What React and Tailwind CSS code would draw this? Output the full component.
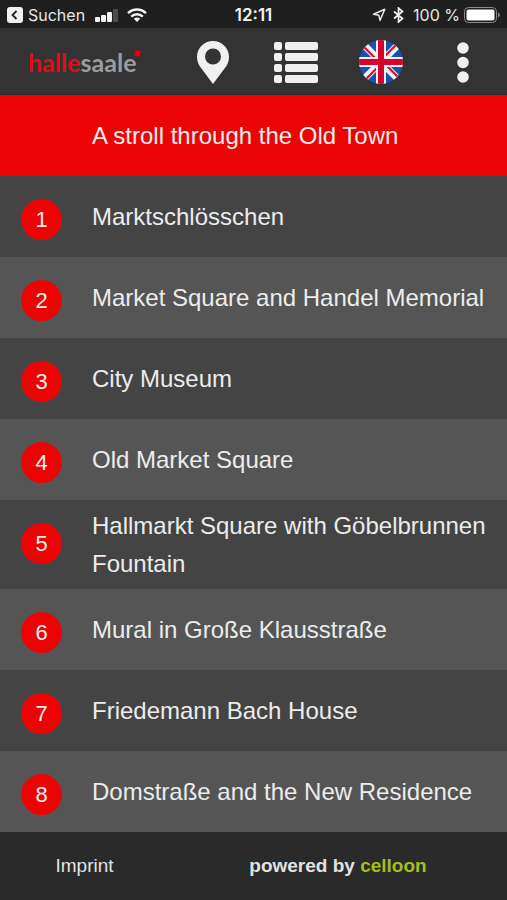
import React from 'react';

const stations = [
    'Marktschlösschen',
    'Market Square and Handel Memorial',
    'City Museum',
    'Old Market Square',
    'Hallmarkt Square with Göbelbrunnen Fountain',
    'Mural in Große Klausstraße',
    'Friedemann Bach House',
    'Domstraße and the New Residence',
];

const StatusBar = () => (
    <div className="grid grid-cols-[1fr_auto_1fr] items-center h-7 pt-[2px] px-[7px] bg-[#1f1f1f] text-[#e6e6e6] font-['Inter','Liberation_Sans',sans-serif] text-base leading-6">
        <div className="flex items-center">
            <svg className="w-4 h-4 mr-[5px]" viewBox="0 0 16 16" aria-hidden="true">
                <rect width="16" height="16" rx="3" fill="#f2f2f2" />
                <path d="M9.5 4 5.5 8l4 4" fill="none" stroke="#222" strokeWidth="1.8" />
            </svg>
            <button type="button" className="mr-[10px]">Suchen</button>
            <svg className="w-[23px] h-[13px] mr-[9px]" viewBox="0 0 23 13" fill="#f2f2f2" aria-hidden="true">
                <rect x="0" y="8" width="5" height="5" rx="1" />
                <rect x="6" y="6" width="5" height="7" rx="1" />
                <rect x="12" y="3" width="5" height="10" rx="1" />
                <rect x="18" y="0" width="5" height="13" rx="1" fill="#4c4c4c" />
            </svg>
            <svg className="w-5 h-[14px]" viewBox="0 0 20 14" fill="none" stroke="#f2f2f2" strokeWidth="2.4" aria-hidden="true">
                <path d="M1 5.2a12.8 12.8 0 0 1 18 0" />
                <path d="M4.2 8.6a8.2 8.2 0 0 1 11.6 0" />
                <path d="M10 14 6.8 10.8a4.5 4.5 0 0 1 6.4 0z" fill="#f2f2f2" stroke="none" />
            </svg>
        </div>
        <time className="font-semibold text-[17px] text-[#f2f2f2]">12:11</time>
        <div className="flex items-center justify-end">
            <svg className="w-[14px] h-[14px] mr-[7px]" viewBox="0 0 14 14" fill="none" stroke="#e6e6e6" strokeWidth="1.5" aria-hidden="true">
                <path d="M12.8 1.2 8 12.4 6.8 7.2 1.5 6.2z" strokeLinejoin="round" />
            </svg>
            <svg className="w-[11px] h-4 mr-[9px]" viewBox="0 0 11 16" fill="none" stroke="#f2f2f2" strokeWidth="1.7" aria-hidden="true">
                <path d="M1 4.5 9.5 11.5 5.5 15V1l4 3.5L1 11.5" />
            </svg>
            <span className="mr-1">100 %</span>
            <svg className="w-9 h-4" viewBox="0 0 36 16" aria-hidden="true">
                <rect x="0.5" y="0.5" width="32" height="15" rx="4" fill="none" stroke="#8a8a8a" />
                <rect x="2.5" y="2.5" width="28" height="11" rx="2" fill="#fff" />
                <path d="M34 5.5c2.4.8 2.4 4.2 0 5z" fill="#8a8a8a" />
            </svg>
        </div>
    </div>
);

const Logo = () => (
    <a href="#home" className="relative font-['Lato','Open_Sans',sans-serif] font-bold text-[25px] leading-8 text-[#9b9b9b]">
        <span className="text-[#d9101b]">halle</span>saale
        <svg className="absolute -right-1 top-1 w-[7px] h-[7px]" viewBox="0 0 7 7" aria-hidden="true">
            <path d="M1.5 0 7 1.5 5.5 7 0 5.5z" fill="#e3000f" />
        </svg>
    </a>
);

const Flag = () => (
    <svg className="w-11 h-11" viewBox="0 0 44 44" aria-hidden="true">
        <clipPath id="flag">
            <circle cx="22" cy="22" r="22" />
        </clipPath>
        <g clipPath="url(#flag)">
            <rect width="44" height="44" fill="#1553b0" />
            <path d="M2 2 42 42M42 2 2 42" stroke="#f2f2f2" strokeWidth="7" />
            <path d="M4 6 20 22M40 38 24 22M38 4 22 20M6 40 22 24" stroke="#e0123a" strokeWidth="2.4" />
            <path d="M22 0v44M0 22h44" stroke="#f2f2f2" strokeWidth="10" />
            <path d="M22 0v44M0 22h44" stroke="#d8002c" strokeWidth="6" />
        </g>
    </svg>
);

const Header = () => (
    <header className="flex items-center justify-between h-[67px] pt-[2px] pl-7 pr-[38px] bg-[#333333] border-b border-[#2b2b2b]">
        <Logo />
        <nav className="flex items-center">
            <button type="button" aria-label="Map" className="mr-[45px]">
                <svg className="w-8 h-[43px]" viewBox="0 0 32 43" fill="#f0f0f0">
                    <path fillRule="evenodd" d="M16 0C7 0 0 7 0 16c0 3.2.9 6 2.4 8.800L16 43l13.600-18.200C31.100 22 32 19.200 32 16 32 7 25 0 16 0zm0 7.500a8 8 0 1 1 0 16 8 8 0 0 1 0-16z" />
                </svg>
            </button>
            <button type="button" aria-label="List" className="mr-[41px]">
                <svg className="w-11 h-[41px]" viewBox="0 0 44 41" fill="#f0f0f0">
                    <rect x="0" y="0" width="8" height="8" rx="2" />
                    <rect x="11" y="0" width="33" height="8" rx="2" />
                    <rect x="0" y="11" width="8" height="8" rx="2" />
                    <rect x="11" y="11" width="33" height="8" rx="2" />
                    <rect x="0" y="22" width="8" height="8" rx="2" />
                    <rect x="11" y="22" width="33" height="8" rx="2" />
                    <rect x="0" y="33" width="8" height="8" rx="2" />
                    <rect x="11" y="33" width="33" height="8" rx="2" />
                </svg>
            </button>
            <button type="button" aria-label="Language" className="mr-[54px]">
                <Flag />
            </button>
            <button type="button" aria-label="More">
                <svg className="w-3 h-[41px]" viewBox="0 0 12 41" fill="#f0f0f0">
                    <circle cx="6" cy="6" r="5.8" />
                    <circle cx="6" cy="20.5" r="5.8" />
                    <circle cx="6" cy="35" r="5.8" />
                </svg>
            </button>
        </nav>
    </header>
);

const Station = ({ number, title }) => (
    <li className="odd:bg-[#444444] even:bg-[#555555]">
        <a href={`#station-${number}`} className="flex min-h-[81px]">
            <span className="shrink-0 w-[41px] h-[41px] mt-[23px] ml-[21px] mr-[30px] rounded-full bg-[#ec0404] text-center text-[22px] leading-[42px]">
                {number}
            </span>
            <span className="self-center pt-[7px] pb-[6px] pr-3 text-2xl leading-[38px]">{title}</span>
        </a>
    </li>
);

const App = () => (
    <div className="flex flex-col min-h-screen bg-[#2a2a2a] text-[#ececec] font-['Liberation_Sans',Arial,sans-serif]">
        <StatusBar />
        <Header />
        <main>
            <h1 className="flex items-center min-h-[81px] pl-[92px] pr-3 bg-[#ec0404] text-2xl leading-[38px]">
                A stroll through the Old Town
            </h1>
            <ol>
                {stations.map((title, index) => (
                    <Station key={title} number={index + 1} title={title} />
                ))}
            </ol>
        </main>
        <footer className="grid grid-cols-[1fr_2fr] items-center grow min-h-[68px] text-[19px] leading-7 text-center text-[#e2e2e2]">
            <a href="#imprint">Imprint</a>
            <p className="font-bold">
                powered by <a href="#celloon" className="text-[#a0c020]">celloon</a>
            </p>
        </footer>
    </div>
);

export default App;
